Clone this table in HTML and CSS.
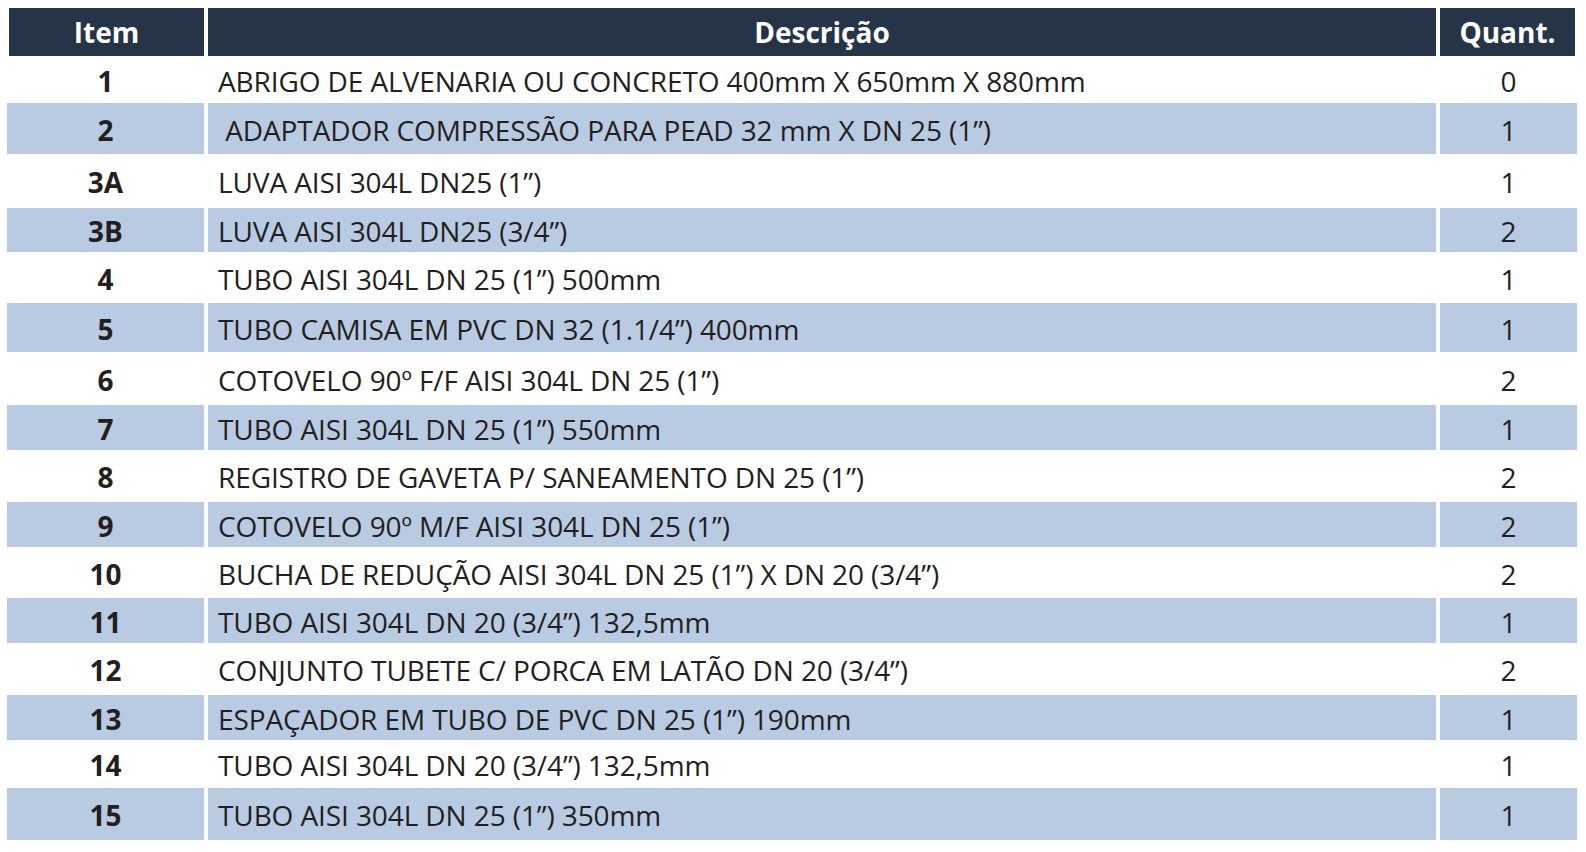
FILE: index.html
```html
<!DOCTYPE html>
<html lang="pt">
<head>
<meta charset="utf-8">
<title>Lista de materiais</title>
<link rel="stylesheet" href="styles.css">
</head>
<body>
<div class="table">
  <div class="row head">
    <div class="cell c-item">Item</div>
    <div class="cell c-desc">Descrição</div>
    <div class="cell c-qty">Quant.</div>
  </div>
  <div class="row h47">
    <div class="cell c-item">1</div>
    <div class="cell c-desc">ABRIGO DE ALVENARIA OU CONCRETO 400mm X 650mm X 880mm</div>
    <div class="cell c-qty">0</div>
  </div>
  <div class="row alt h51">
    <div class="cell c-item">2</div>
    <div class="cell c-desc"> ADAPTADOR COMPRESSÃO PARA PEAD 32 mm X DN 25 (1”)</div>
    <div class="cell c-qty">1</div>
  </div>
  <div class="row h54">
    <div class="cell c-item">3A</div>
    <div class="cell c-desc">LUVA AISI 304L DN25 (1”)</div>
    <div class="cell c-qty">1</div>
  </div>
  <div class="row alt h44">
    <div class="cell c-item">3B</div>
    <div class="cell c-desc">LUVA AISI 304L DN25 (3/4”)</div>
    <div class="cell c-qty">2</div>
  </div>
  <div class="row h51">
    <div class="cell c-item">4</div>
    <div class="cell c-desc">TUBO AISI 304L DN 25 (1”) 500mm</div>
    <div class="cell c-qty">1</div>
  </div>
  <div class="row alt h49">
    <div class="cell c-item">5</div>
    <div class="cell c-desc">TUBO CAMISA EM PVC DN 32 (1.1/4”) 400mm</div>
    <div class="cell c-qty">1</div>
  </div>
  <div class="row h53">
    <div class="cell c-item">6</div>
    <div class="cell c-desc">COTOVELO 90º F/F AISI 304L DN 25 (1”)</div>
    <div class="cell c-qty">2</div>
  </div>
  <div class="row alt h45">
    <div class="cell c-item">7</div>
    <div class="cell c-desc">TUBO AISI 304L DN 25 (1”) 550mm</div>
    <div class="cell c-qty">1</div>
  </div>
  <div class="row h52">
    <div class="cell c-item">8</div>
    <div class="cell c-desc">REGISTRO DE GAVETA P/ SANEAMENTO DN 25 (1”)</div>
    <div class="cell c-qty">2</div>
  </div>
  <div class="row alt h45">
    <div class="cell c-item">9</div>
    <div class="cell c-desc">COTOVELO 90º M/F AISI 304L DN 25 (1”)</div>
    <div class="cell c-qty">2</div>
  </div>
  <div class="row h51">
    <div class="cell c-item">10</div>
    <div class="cell c-desc">BUCHA DE REDUÇÃO AISI 304L DN 25 (1”) X DN 20 (3/4”)</div>
    <div class="cell c-qty">2</div>
  </div>
  <div class="row alt h45">
    <div class="cell c-item">11</div>
    <div class="cell c-desc">TUBO AISI 304L DN 20 (3/4”) 132,5mm</div>
    <div class="cell c-qty">1</div>
  </div>
  <div class="row h52">
    <div class="cell c-item">12</div>
    <div class="cell c-desc">CONJUNTO TUBETE C/ PORCA EM LATÃO DN 20 (3/4”)</div>
    <div class="cell c-qty">2</div>
  </div>
  <div class="row alt h45">
    <div class="cell c-item">13</div>
    <div class="cell c-desc">ESPAÇADOR EM TUBO DE PVC DN 25 (1”) 190mm</div>
    <div class="cell c-qty">1</div>
  </div>
  <div class="row h48">
    <div class="cell c-item">14</div>
    <div class="cell c-desc">TUBO AISI 304L DN 20 (3/4”) 132,5mm</div>
    <div class="cell c-qty">1</div>
  </div>
  <div class="row alt h52">
    <div class="cell c-item">15</div>
    <div class="cell c-desc">TUBO AISI 304L DN 25 (1”) 350mm</div>
    <div class="cell c-qty">1</div>
  </div>
</div>
</body>
</html>
```

FILE: styles.css
```css
* { box-sizing: border-box; }

html, body {
  margin: 0;
  padding: 0;
  background: #ffffff;
}

body {
  font-family: "Open Sans", "Noto Sans", "DejaVu Sans", sans-serif;
  color: #231f20;
  font-size: 28px;
  line-height: 1;
}

.table {
  display: flex;
  flex-direction: column;
  padding: 8px 0 0 7px;
  width: 1577px;
}

.row {
  display: grid;
  grid-template-columns: 197px 1228px 137px;
  column-gap: 4px;
}

.cell {
  display: flex;
  align-items: center;
  white-space: pre;
  padding-top: 2px;
}

.c-item {
  justify-content: center;
  font-weight: 700;
}

.c-desc {
  padding-left: 10px;
  letter-spacing: -0.1px;
}

.c-qty {
  justify-content: center;
}

.head {
  height: 48px;
  margin-left: 2px;
  grid-template-columns: 195px 1228px 135px;
}

.head .cell {
  background: #263447;
  color: #ffffff;
  font-weight: 700;
  justify-content: center;
  padding-left: 0;
  padding-top: 0;
  letter-spacing: 0;
}

.alt .cell {
  background: #b9cbe3;
}

.h44 { height: 44px; }
.h45 { height: 45px; }
.h47 { height: 47px; }
.h48 { height: 48px; }
.h49 { height: 49px; }
.h51 { height: 51px; }
.h52 { height: 52px; }
.h53 { height: 53px; }
.h54 { height: 54px; }
```
